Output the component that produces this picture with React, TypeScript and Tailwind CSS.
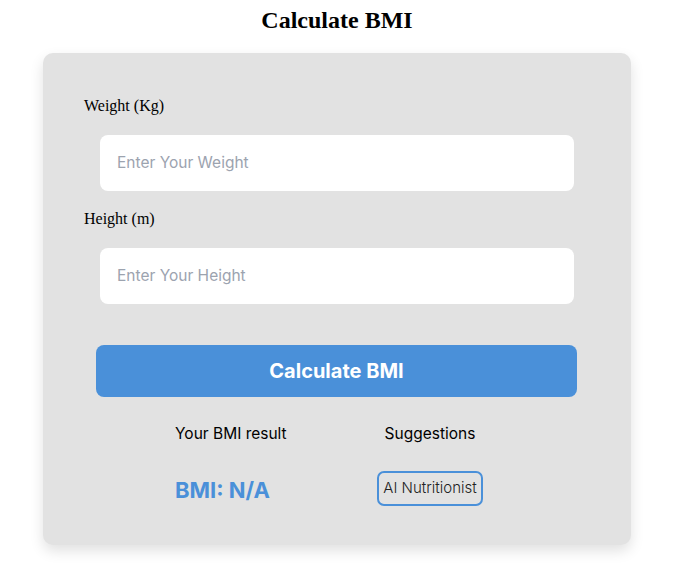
import React from "react";

export default function App() {
  return (
    <div className="w-[674px] bg-white pb-[28px]">
      <h1 className="pt-[4px] text-center text-[24px] font-bold leading-[32px] text-black [font-family:'Liberation_Serif',serif]">
        Calculate BMI
      </h1>
      <div className="mx-auto mt-[17px] w-[588px] rounded-[10px] bg-[#e2e2e2] pb-[39px] pt-[44px] shadow-[0_6px_14px_rgba(0,0,0,0.12)]">
        <label className="ml-[41px] block text-[16px] leading-[18px] text-black [font-family:'Liberation_Serif',serif]">
          Weight (Kg)
        </label>
        <div className="ml-[57px] mt-[20px] flex h-[56px] w-[474px] items-center rounded-[8px] bg-white px-[17px]">
          <span className="text-[15.5px] text-[#9ca3af] [font-family:Inter,sans-serif]">Enter Your Weight</span>
        </div>
        <label className="ml-[41px] mt-[19px] block text-[16px] leading-[18px] text-black [font-family:'Liberation_Serif',serif]">
          Height (m)
        </label>
        <div className="ml-[57px] mt-[20px] flex h-[56px] w-[474px] items-center rounded-[8px] bg-white px-[17px]">
          <span className="text-[15.5px] text-[#9ca3af] [font-family:Inter,sans-serif]">Enter Your Height</span>
        </div>
        <div className="ml-[53px] mt-[41px] flex h-[52px] w-[481px] items-center justify-center rounded-[8px] bg-[#4a90d9]">
          <span className="text-[20px] font-bold text-white [font-family:Inter,sans-serif]">Calculate BMI</span>
        </div>
        <div className="mt-[26px] flex">
          <div className="ml-[132px] flex w-[140px] flex-col">
            <span className="text-[15.5px] leading-[22px] text-black [font-family:Inter,sans-serif]">Your BMI result</span>
            <span className="mt-[31px] text-[22px] font-bold leading-[28px] text-[#4a90d9] [font-family:Inter,sans-serif]">BMI: N/A</span>
          </div>
          <div className="ml-[62px] flex w-[106px] flex-col items-center">
            <span className="text-[15.5px] leading-[22px] text-black [font-family:Inter,sans-serif]">Suggestions</span>
            <div className="mt-[26px] flex h-[35px] w-[106px] items-center justify-center rounded-[7px] border-2 border-[#4a90d9]">
              <span className="text-[15px] font-light text-[#222] [font-family:Inter,sans-serif]">AI Nutritionist</span>
            </div>
          </div>
        </div>
      </div>
    </div>
  );
}
